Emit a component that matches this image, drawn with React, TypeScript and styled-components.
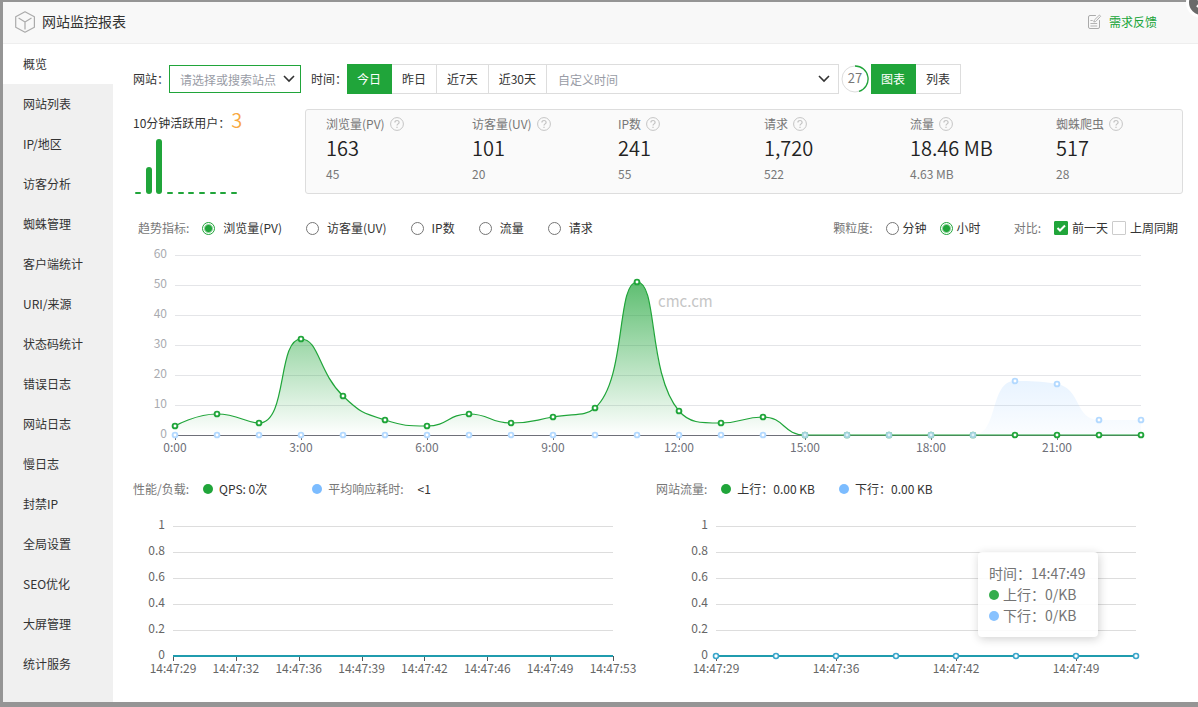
import React, { useLayoutEffect, useRef, useState } from "react";
import styled, { createGlobalStyle } from "styled-components";

const GREEN = "#20a53a";
const BLUE = "#7cbcff";
const FONT = '"Noto Sans CJK SC", "Open Sans", sans-serif';

const GlobalStyle = createGlobalStyle`
  *, *::before, *::after { box-sizing: border-box; }
  body {
    margin: 0;
    background: #959595;
    font-family: ${FONT};
    font-size: 12px;
    line-height: 20px;
    color: #333;
  }
  button, input, select { font-family: inherit; font-size: 12px; color: inherit; margin: 0; }
`;

const Backdrop = styled.div`
  padding: 2px 0 5px 3px;
  min-height: 100vh;
  display: flex;
  overflow: hidden;
  background: #959595;
`;

const Dialog = styled.div`
  position: relative;
  flex: 1;
  min-width: 0;
  display: flex;
  flex-direction: column;
  background: #fff;
`;

const Header = styled.header`
  display: flex;
  align-items: center;
  height: 42px;
  padding: 0 41px 2px 12px;
  background: #f8f8f8;
  border-bottom: 1px solid #eee;
`;

const Title = styled.h1`
  flex: 1;
  margin: 0 0 0 5px;
  padding-bottom: 2px;
  font-size: 14px;
  font-weight: 400;
`;

const Feedback = styled.a`
  display: flex;
  align-items: center;
  gap: 7px;
  color: ${GREEN};
  text-decoration: none;
`;

const CloseButton = styled.button`
  position: absolute;
  top: -15px;
  right: -19px;
  width: 31px;
  height: 31px;
  padding: 0;
  border: 3px solid #fff;
  border-radius: 50%;
  background: #6a6a6a;
  display: flex;
  align-items: center;
  justify-content: center;
`;

const Body = styled.div`
  flex: 1;
  display: flex;
`;

const Sidebar = styled.nav`
  width: 110px;
  flex: none;
  background: #f0f0f0;
`;

const NavLink = styled.a<{ $active?: boolean }>`
  display: block;
  height: 40px;
  padding-left: 20px;
  line-height: 40px;
  color: #333;
  text-decoration: none;
  background: ${(p) => (p.$active ? "#fff" : "transparent")};
`;

const Main = styled.main`
  flex: 1;
  min-width: 0;
  padding: 20px 15px 12px 20px;
`;

const Toolbar = styled.div`
  display: flex;
  align-items: center;
  height: 30px;
`;

const SelectWrap = styled.div<{ $grow?: boolean }>`
  position: relative;
  display: flex;
  align-items: center;
  ${(p) => (p.$grow ? "width: 293px; margin-left: -1px;" : "width: 132px; margin: 0 10px 0 0;")}
  svg {
    position: absolute;
    right: ${(p) => (p.$grow ? "9px" : "6px")};
    pointer-events: none;
  }
`;

const Select = styled.select<{ $accent?: boolean }>`
  appearance: none;
  width: 100%;
  height: ${(p) => (p.$accent ? 28 : 30)}px;
  padding: 0 ${(p) => (p.$accent ? 10 : 11)}px;
  border: 1px solid ${(p) => (p.$accent ? GREEN : "#ddd")};
  border-radius: 0;
  background: #fff;
  color: #999ca6;
`;

const FieldLabel = styled.label`
  width: 36px;
  white-space: nowrap;
`;

const Segments = styled.div`
  display: flex;
`;

const Segment = styled.button<{ $active?: boolean }>`
  height: 30px;
  padding: 0 10px 2px;
  border: 1px solid ${(p) => (p.$active ? GREEN : "#ddd")};
  border-left: 0;
  background: ${(p) => (p.$active ? GREEN : "#fff")};
  color: ${(p) => (p.$active ? "#fff" : "#333")};
  white-space: nowrap;
`;

const Countdown = styled.svg`
  margin: 0 2px;
  flex: none;
`;

const Overview = styled.section`
  display: flex;
  margin-top: 15px;
`;

const ActiveUsers = styled.div`
  width: 172px;
  flex: none;
  white-space: nowrap;
`;

const ActiveCount = styled.span`
  margin-left: 1px;
  font-size: 20px;
  font-weight: 350;
  line-height: 22px;
  color: #f9a83e;
`;

const MiniBars = styled.div`
  display: flex;
  align-items: flex-end;
  justify-content: space-between;
  width: 104px;
  height: 61px;
  padding-left: 2px;
`;

const MiniBar = styled.span`
  width: 6px;
  border-radius: 3px;
  background: ${GREEN};
`;

const Stats = styled.div`
  flex: 1;
  display: grid;
  grid-template-columns: repeat(6, 1fr);
  height: 85px;
  border: 1px solid #ddd;
  border-radius: 3px;
  background: #fafafa;
`;

const Stat = styled.div`
  padding: 4px 0 0 20px;
  color: #777;
  white-space: nowrap;
`;

const StatName = styled.div`
  display: flex;
  align-items: center;
  gap: 5px;
  height: 20px;
`;

const StatValue = styled.div`
  font-size: 20px;
  font-weight: 350;
  line-height: 28px;
  color: #222;
`;

const StatSub = styled.div`
  padding-top: 2px;
  line-height: 20px;
`;

const TrendBar = styled.div`
  display: flex;
  justify-content: space-between;
  margin-top: 24px;
  padding: 0 5px;
`;

const OptionGroup = styled.div<{ $gap: number }>`
  display: flex;
  align-items: center;
  gap: ${(p) => p.$gap}px;
  white-space: nowrap;
`;

const Muted = styled.span`
  color: #777;
`;

const Option = styled.label<{ $gap: number }>`
  display: flex;
  align-items: center;
  gap: ${(p) => p.$gap}px;
`;

const Radio = styled.input`
  appearance: none;
  width: 13px;
  height: 13px;
  border: 1px solid #767676;
  border-radius: 50%;
  background: #fff;
  &:checked {
    border-color: ${GREEN};
    background: radial-gradient(circle, ${GREEN} 0 3px, #fff 5px);
  }
`;

const CheckWrap = styled.span`
  position: relative;
  display: flex;
  svg { position: absolute; inset: 0; pointer-events: none; }
`;

const Checkbox = styled.input`
  appearance: none;
  width: 14px;
  height: 14px;
  border: 1px solid #ccc;
  border-radius: 1px;
  background: #fff;
  &:checked { border-color: ${GREEN}; background: ${GREEN}; }
`;

const ChartBox = styled.div<{ $height: number }>`
  position: relative;
  height: ${(p) => p.$height}px;
  svg { display: block; width: 100%; height: 100%; overflow: visible; }
  text { font-family: ${FONT}; font-size: 12px; }
`;

const Panels = styled.section`
  display: grid;
  grid-template-columns: 1fr 1fr;
  margin-top: 19px;
  padding-right: 4px;
`;

const Legend = styled.div`
  display: flex;
  align-items: center;
  height: 20px;
  white-space: nowrap;
`;

const Dot = styled.span<{ $color: string }>`
  flex: none;
  width: 10px;
  height: 10px;
  border-radius: 50%;
  background: ${(p) => p.$color};
`;

const LegendItem = styled.span<{ $lead: number }>`
  display: flex;
  align-items: center;
  gap: 6px;
  margin-left: ${(p) => p.$lead}px;
`;

const Tooltip = styled.div`
  position: absolute;
  right: 81px;
  top: 53px;
  width: 120px;
  padding: 11px;
  border-radius: 4px;
  background: #fff;
  box-shadow: 1px 2px 10px rgba(0, 0, 0, 0.2);
  opacity: 0.9;
  color: #666;
  font-size: 14px;
  line-height: 21px;
  white-space: nowrap;
`;

const TooltipRow = styled.div`
  display: flex;
  align-items: center;
  gap: 4px;
`;

function useWidth(initial: number) {
  const ref = useRef<HTMLDivElement>(null);
  const [width, setWidth] = useState(initial);
  useLayoutEffect(() => {
    const el = ref.current;
    if (!el) return;
    const update = () => setWidth(el.clientWidth);
    update();
    const observer = new ResizeObserver(update);
    observer.observe(el);
    return () => observer.disconnect();
  }, []);
  return [ref, width] as const;
}

type Point = [number, number];

const clamp = (v: number, a: number, b: number) =>
  Math.max(Math.min(v, Math.max(a, b)), Math.min(a, b));

// Cubic spline whose control points never leave the span between neighbours.
function smoothPath(points: Point[], smooth = 0.5) {
  let c0: Point = points[0];
  let d = `M${points[0][0]},${points[0][1]}`;
  for (let i = 1; i < points.length; i++) {
    const [x, y] = points[i];
    const prev = points[i - 1];
    const next = points[i + 1];
    let c1: Point = [x, y];
    let nextC0: Point = [x, y];
    if (next) {
      const lenPrev = Math.hypot(x - prev[0], y - prev[1]);
      const lenNext = Math.hypot(next[0] - x, next[1] - y);
      const ratio = lenNext / (lenNext + lenPrev);
      nextC0 = [
        clamp(x + (next[0] - prev[0]) * smooth * ratio, x, next[0]),
        clamp(y + (next[1] - prev[1]) * smooth * ratio, y, next[1]),
      ];
      c1 = [
        clamp(x - ((nextC0[0] - x) * lenPrev) / lenNext, prev[0], x),
        clamp(y - ((nextC0[1] - y) * lenPrev) / lenNext, prev[1], y),
      ];
      nextC0 = [
        x + ((x - c1[0]) * lenNext) / lenPrev,
        y + ((y - c1[1]) * lenNext) / lenPrev,
      ];
    }
    d += `C${c0[0]},${c0[1]} ${c1[0]},${c1[1]} ${x},${y}`;
    c0 = nextC0;
  }
  return d;
}

const today = [3, 7, 4, 32, 13, 5, 3, 7, 4, 6, 9, 51, 8, 4, 6, 0, 0, 0, 0, 0, 0, 0, 0, 0];
const yesterday = [...Array(20).fill(0), 18, 17, 5, 5];

function TrendChart() {
  const [ref, width] = useWidth(1050);
  const left = 42;
  const right = width - 42;
  const base = 197;
  const step = (right - left) / 23;
  const toPoints = (values: number[]): Point[] =>
    values.map((v, i) => [left + i * step, base - v * 3]);
  const a = toPoints(today);
  const b = toPoints(yesterday);
  const lineA = smoothPath(a);
  const lineB = smoothPath(b);
  const close = `L${right},${base}L${left},${base}Z`;
  return (
    <ChartBox ref={ref} $height={222}>
      <svg role="img" aria-label="趋势图">
        <defs>
          <linearGradient id="areaToday" x1="0" y1="0" x2="0" y2="1">
            <stop offset="0" stopColor={GREEN} stopOpacity="0.72" />
            <stop offset="1" stopColor={GREEN} stopOpacity="0" />
          </linearGradient>
          <linearGradient id="areaYesterday" x1="0" y1="0" x2="0" y2="1">
            <stop offset="0" stopColor={BLUE} stopOpacity="0.17" />
            <stop offset="1" stopColor={BLUE} stopOpacity="0.03" />
          </linearGradient>
        </defs>
        {[0, 10, 20, 30, 40, 50, 60].map((v) => (
          <g key={v}>
            <text x={left - 8} y={base - v * 3 + 3} textAnchor="end" fill="#a9abb0">
              {v}
            </text>
            <line
              x1={left}
              x2={right}
              y1={base - v * 3 + 0.5}
              y2={base - v * 3 + 0.5}
              stroke={v ? "#e4e5e8" : "#6e7079"}
            />
          </g>
        ))}
        {[0, 3, 6, 9, 12, 15, 18, 21].map((h) => (
          <g key={h}>
            <line
              x1={Math.round(left + h * step) + 0.5}
              x2={Math.round(left + h * step) + 0.5}
              y1={base}
              y2={base + 5}
              stroke="#6e7079"
            />
            <text x={left + h * step} y={base + 17} textAnchor="middle" fill="#6e7079">
              {h}:00
            </text>
          </g>
        ))}
        <path d={lineB + close} fill="url(#areaYesterday)" />
        <path d={lineA + close} fill="url(#areaToday)" />
        <path d={lineA} fill="none" stroke={GREEN} strokeWidth="1.2" />
        {a.map(([x, y], i) => (
          <circle key={i} cx={x} cy={y} r="2.4" fill="#fff" stroke={GREEN} strokeWidth="1.9" />
        ))}
        {b.map(([x, y], i) =>
          i > 14 && i < 20 ? (
            <circle key={i} cx={x} cy={y} r="2.4" fill="#e2f3f7" stroke="#a4d3df" strokeWidth="1.9" />
          ) : (
            <circle key={i} cx={x} cy={y} r="2.4" fill="#fff" stroke="#b3d9ff" strokeWidth="1.9" />
          )
        )}
        <text x={width / 2} y={69} fill="#c6c6c6" style={{ fontSize: 15 }}>
          cmc.cm
        </text>
      </svg>
    </ChartBox>
  );
}

type LoadChartProps = {
  label: string;
  left: number;
  times: string[];
  every: number;
  markers?: boolean;
  children?: React.ReactNode;
};

function LoadChart({ label, left, times, every, markers, children }: LoadChartProps) {
  const [ref, width] = useWidth(523);
  const right = width - 43;
  const base = 157;
  const step = (right - left) / 7;
  return (
    <ChartBox ref={ref} $height={183}>
      <svg role="img" aria-label={label}>
        {["0", "0.2", "0.4", "0.6", "0.8", "1"].map((v, i) => (
          <g key={v}>
            <text x={left - 8} y={base - i * 26 + 3} textAnchor="end" fill="#666">
              {v}
            </text>
            <line
              x1={left}
              x2={right}
              y1={base - i * 26 + 0.5}
              y2={base - i * 26 + 0.5}
              stroke="#ddd"
            />
          </g>
        ))}
        {times.map((t, i) => (
          <g key={t}>
            <line
              x1={Math.round(left + i * every * step) + 0.5}
              x2={Math.round(left + i * every * step) + 0.5}
              y1={base}
              y2={base + 5}
              stroke="#555"
            />
            <text x={left + i * every * step} y={base + 17} textAnchor="middle" fill="#666">
              {t}
            </text>
          </g>
        ))}
        <line x1={left} x2={right} y1={base} y2={base} stroke="#209cae" strokeWidth="2" />
        {markers &&
          Array.from({ length: 8 }, (_, i) => (
            <circle
              key={i}
              cx={left + i * step}
              cy={base}
              r="2.5"
              fill="#fff"
              stroke="#3ba6cb"
              strokeWidth="1.6"
            />
          ))}
      </svg>
      {children}
    </ChartBox>
  );
}

const Chevron = () => (
  <svg width="12" height="8" viewBox="0 0 12 8" fill="none" stroke="#333" strokeWidth="1.6" aria-hidden="true">
    <path d="M1 1l5 5 5-5" />
  </svg>
);

const HelpIcon = () => (
  <svg width="14" height="14" viewBox="0 0 14 14" fill="none" stroke="#c4c4c4" aria-hidden="true">
    <circle cx="7" cy="7" r="6.4" />
    <path d="M4.900 5.600C4.900 4.200 5.800 3.500 7 3.500s2.100.8 2.100 1.900C9.100 6.900 7 6.900 7 8.600M7 9.700v1.300" strokeWidth="1.2" />
  </svg>
);

const CubeIcon = () => (
  <svg width="22" height="22" viewBox="0 0 22 22" fill="none" stroke="#aaa" strokeWidth="1.2" strokeLinejoin="round" aria-hidden="true">
    <path d="M10 .8l9.400 4.900v10.500L10 21.200.7 16.200V5.700z" />
    <path d="M3.600 7.100L10 10.900l6.500-3.800M10 10.900v7.600" />
  </svg>
);

const NoteIcon = () => (
  <svg width="14" height="16" viewBox="0 0 14 16" fill="none" stroke="#aaa" strokeLinecap="round" aria-hidden="true">
    <path d="M7.500 1.500H2a1.500 1.500 0 0 0-1.500 1.500v10A1.500 1.500 0 0 0 2 14.500h8a1.500 1.500 0 0 0 1.500-1.500V6.500" />
    <path d="M11.200 1.300L6.300 6.100l-.5 1.900 1.900-.5 4.600-4.900zM2.800 6.500h1.500M2.800 9.500h6M2.800 12h6" strokeWidth=".9" />
  </svg>
);

const navItems = [
  "概览", "网站列表", "IP/地区", "访客分析", "蜘蛛管理", "客户端统计", "URI/来源", "状态码统计",
  "错误日志", "网站日志", "慢日志", "封禁IP", "全局设置", "SEO优化", "大屏管理", "统计服务",
];

const stats = [
  ["浏览量(PV)", "163", "45"],
  ["访客量(UV)", "101", "20"],
  ["IP数", "241", "55"],
  ["请求", "1,720", "522"],
  ["流量", "18.46 MB", "4.63 MB"],
  ["蜘蛛爬虫", "517", "28"],
];

const activeBars = [2, 27, 55, 2, 2, 2, 2, 2, 2, 2];

export default function App() {
  return (
    <>
      <GlobalStyle />
      <Backdrop>
        <Dialog role="dialog" aria-labelledby="dialog-title">
          <Header>
            <CubeIcon />
            <Title id="dialog-title">网站监控报表</Title>
            <Feedback href="#feedback">
              <NoteIcon />
              需求反馈
            </Feedback>
          </Header>
          <CloseButton type="button" aria-label="关闭">
            <svg width="11" height="11" viewBox="0 0 11 11" stroke="#fff" strokeWidth="2.4" aria-hidden="true">
              <path d="M1 1l9 9M10 1l-9 9" />
            </svg>
          </CloseButton>
          <Body>
            <Sidebar>
              {navItems.map((item, i) => (
                <NavLink key={item} href={`#nav-${i}`} $active={i === 0}>
                  {item}
                </NavLink>
              ))}
            </Sidebar>
            <Main>
              <Toolbar>
                <FieldLabel htmlFor="site">网站：</FieldLabel>
                <SelectWrap>
                  <Select id="site" $accent>
                    <option>请选择或搜索站点</option>
                  </Select>
                  <Chevron />
                </SelectWrap>
                <FieldLabel htmlFor="range">时间：</FieldLabel>
                <Segments>
                  <Segment type="button" $active>今日</Segment>
                  <Segment type="button">昨日</Segment>
                  <Segment type="button">近7天</Segment>
                  <Segment type="button">近30天</Segment>
                </Segments>
                <SelectWrap $grow>
                  <Select id="range">
                    <option>自定义时间</option>
                  </Select>
                  <Chevron />
                </SelectWrap>
                <Countdown width="28" height="28" viewBox="0 0 28 28" fill="none">
                  <circle cx="14" cy="14" r="13" stroke="#ddd" />
                  <path d="M14 1A13 13 0 0 1 18 26.400" stroke={GREEN} strokeWidth="1.3" />
                  <text x="14" y="18" textAnchor="middle" fontSize="13" fill="#777">27</text>
                </Countdown>
                <Segments>
                  <Segment type="button" $active>图表</Segment>
                  <Segment type="button">列表</Segment>
                </Segments>
              </Toolbar>
              <Overview>
                <ActiveUsers>
                  10分钟活跃用户：<ActiveCount>3</ActiveCount>
                  <MiniBars>
                    {activeBars.map((h, i) => (
                      <MiniBar key={i} style={{ height: h }} />
                    ))}
                  </MiniBars>
                </ActiveUsers>
                <Stats>
                  {stats.map(([name, value, sub]) => (
                    <Stat key={name}>
                      <StatName>{name}<HelpIcon /></StatName>
                      <StatValue>{value}</StatValue>
                      <StatSub>{sub}</StatSub>
                    </Stat>
                  ))}
                </Stats>
              </Overview>
              <TrendBar>
                <OptionGroup $gap={24}>
                  <OptionGroup $gap={13}>
                    <Muted>趋势指标:</Muted>
                    <Option $gap={8}><Radio type="radio" name="metric" defaultChecked />浏览量(PV)</Option>
                  </OptionGroup>
                  {["访客量(UV)", "IP数", "流量", "请求"].map((m) => (
                    <Option key={m} $gap={8}><Radio type="radio" name="metric" />{m}</Option>
                  ))}
                </OptionGroup>
                <OptionGroup $gap={33}>
                  <OptionGroup $gap={13}>
                    <Muted>颗粒度:</Muted>
                    <Option $gap={4}><Radio type="radio" name="grain" />分钟</Option>
                    <Option $gap={4}><Radio type="radio" name="grain" defaultChecked />小时</Option>
                  </OptionGroup>
                  <OptionGroup $gap={13}>
                    <Muted>对比:</Muted>
                    <OptionGroup $gap={4}>
                      <Option $gap={4}>
                        <CheckWrap>
                          <Checkbox type="checkbox" defaultChecked />
                          <svg width="14" height="14" viewBox="0 0 14 14" fill="none" stroke="#fff" strokeWidth="2" aria-hidden="true">
                            <path d="M3.500 7l2.500 2.500L11 4.500" />
                          </svg>
                        </CheckWrap>
                        前一天
                      </Option>
                      <Option $gap={4}><Checkbox type="checkbox" />上周同期</Option>
                    </OptionGroup>
                  </OptionGroup>
                </OptionGroup>
              </TrendBar>
              <TrendChart />
              <Panels>
                <div>
                  <Legend>
                    <Muted>性能/负载:</Muted>
                    <LegendItem $lead={14}><Dot $color={GREEN} />QPS: 0次</LegendItem>
                    <LegendItem $lead={45}><Dot $color={BLUE} /><Muted>平均响应耗时:</Muted></LegendItem>
                    <LegendItem $lead={14}>&lt;1</LegendItem>
                  </Legend>
                  <LoadChart
                    label="性能/负载"
                    left={40}
                    every={1}
                    times={["14:47:29", "14:47:32", "14:47:36", "14:47:39", "14:47:42", "14:47:46", "14:47:49", "14:47:53"]}
                  />
                </div>
                <div>
                  <Legend>
                    <Muted>网站流量:</Muted>
                    <LegendItem $lead={14}><Dot $color={GREEN} />上行：0.00 KB</LegendItem>
                    <LegendItem $lead={24}><Dot $color={BLUE} />下行：0.00 KB</LegendItem>
                  </Legend>
                  <LoadChart
                    label="网站流量"
                    left={60}
                    every={2}
                    markers
                    times={["14:47:29", "14:47:36", "14:47:42", "14:47:49"]}
                  >
                    <Tooltip role="tooltip">
                      <TooltipRow>时间：14:47:49</TooltipRow>
                      <TooltipRow><Dot $color={GREEN} />上行：0/KB</TooltipRow>
                      <TooltipRow><Dot $color={BLUE} />下行：0/KB</TooltipRow>
                    </Tooltip>
                  </LoadChart>
                </div>
              </Panels>
            </Main>
          </Body>
        </Dialog>
      </Backdrop>
    </>
  );
}
